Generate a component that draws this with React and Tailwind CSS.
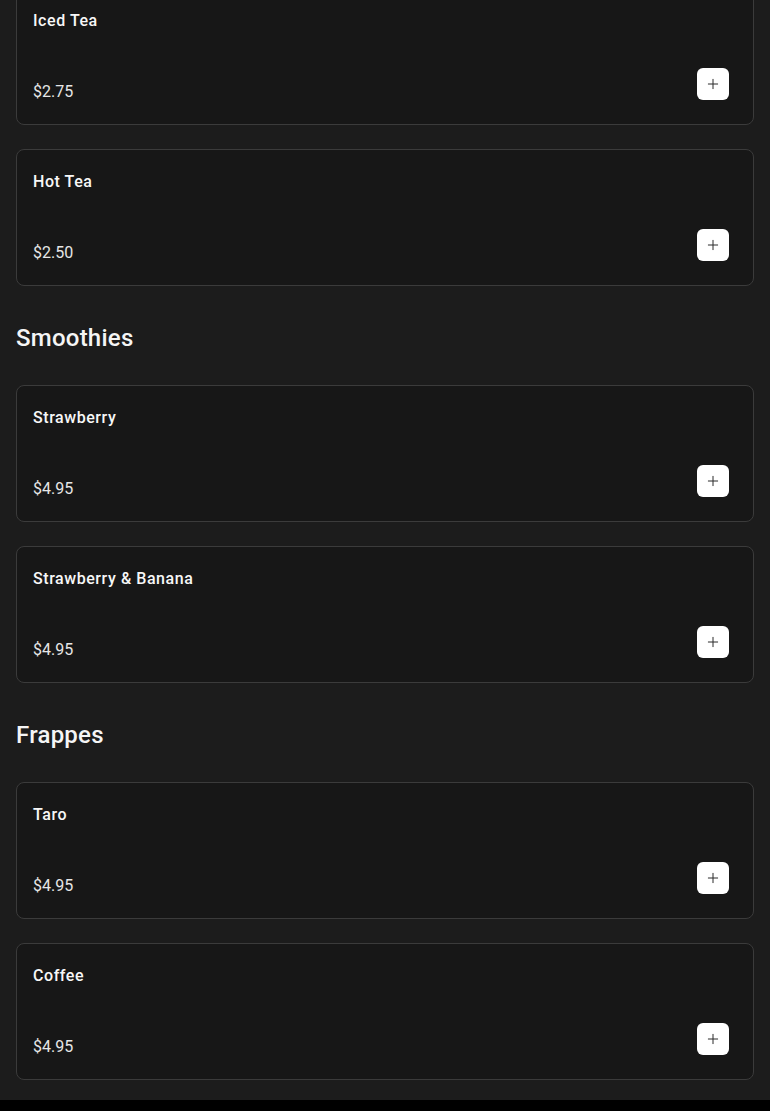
import React from 'react';
import { Plus } from 'lucide-react';

const sections = [
  {
    title: null,
    items: [
      { name: 'Iced Tea', price: '$2.75' },
      { name: 'Hot Tea', price: '$2.50' }
    ]
  },
  {
    title: 'Smoothies',
    items: [
      { name: 'Strawberry', price: '$4.95' },
      { name: 'Strawberry & Banana', price: '$4.95' }
    ]
  },
  {
    title: 'Frappes',
    items: [
      { name: 'Taro', price: '$4.95' },
      { name: 'Coffee', price: '$4.95' }
    ]
  }
];

function MenuCard({ item }) {
  return (
    <div className="flex flex-col rounded-lg border border-[#3b3b3b] bg-[#171717] pb-[20px] pl-4 pr-6 pt-[20px]">
      <h3 className="text-base font-medium leading-6 tracking-[0.035em] text-[#f7f7f7]">{item.name}</h3>
      <div className="mt-[35px] flex items-start justify-between">
        <span className="pt-[12px] text-base leading-6 text-[#e6e6e6]">{item.price}</span>
        <button className="flex h-8 w-8 items-center justify-center rounded-md bg-white text-[#2a2a2a]">
          <Plus size={16} strokeWidth={1.5} />
        </button>
      </div>
    </div>
  );
}

export default function App() {
  return (
    <div className="h-[1111px] overflow-hidden bg-[#1c1c1c] font-['Roboto',sans-serif]">
      <div className="-mt-[12px] flex flex-col px-4">
        {sections.map((section, i) => (
          <section key={i} className={i > 0 ? 'mt-9' : ''}>
            {section.title && (
              <h2 className="mb-[31px] text-2xl font-medium leading-8 tracking-[0.01em] text-[#f5f5f5]">
                {section.title}
              </h2>
            )}
            <div className="flex flex-col gap-6">
              {section.items.map((item) => (
                <MenuCard key={item.name} item={item} />
              ))}
            </div>
          </section>
        ))}
        <div className="h-5" />
      </div>
      <div className="h-[40px] bg-black" />
    </div>
  );
}
